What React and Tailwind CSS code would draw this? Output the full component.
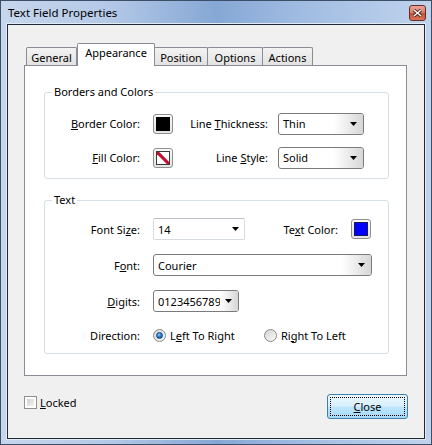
import React from "react";

function Arrow() {
  return (
    <svg width="7" height="4" viewBox="0 0 7 4" className="block">
      <polygon points="0,0 7,0 3.5,4" fill="#000" />
    </svg>
  );
}

function Select({ width, value, clip }) {
  return (
    <div className={`flex h-[22px] border border-[#7b7b7b] rounded-[3px] bg-white overflow-hidden ${width}`}>
      <div className="flex-1 min-w-0 pl-[4px] flex items-center overflow-hidden whitespace-nowrap">{value}</div>
      <div className={`${clip ? "w-[18px]" : "w-[30px]"} h-full bg-gradient-to-r from-white via-[#ececec] to-[#d6d6d6] flex items-center justify-end pr-[6px]`}>
        <Arrow />
      </div>
    </div>
  );
}

function Swatch({ kind }) {
  return (
    <div className="w-[20px] h-[20px] rounded-[3px] border border-[#8e8f8f] bg-gradient-to-b from-[#f8f8f8] to-[#e4e4e4] p-[2px]">
      {kind === "black" && <div className="w-full h-full bg-black border border-black" />}
      {kind === "blue" && <div className="w-full h-full bg-[#0000ff] border border-[#1a1a5a]" />}
      {kind === "none" && (
        <div className="w-full h-full bg-white border border-[#3a3a3a] overflow-hidden">
          <svg width="14" height="14" viewBox="0 0 14 14" className="block">
            <line x1="0" y1="0" x2="14" y2="14" stroke="#c8102e" strokeWidth="3.2" />
          </svg>
        </div>
      )}
    </div>
  );
}

function Radio({ checked }) {
  return (
    <div className="w-[13px] h-[13px] rounded-full border border-[#8a8a8a] bg-gradient-to-br from-[#d4d4d4] to-[#fafafa] flex items-center justify-center">
      {checked && (
        <div className="w-[7px] h-[7px] rounded-full bg-[radial-gradient(circle_at_40%_35%,#8ccaf5_0%,#2a7fcf_45%,#0b3f7a_100%)] border border-[#174a82]" />
      )}
    </div>
  );
}

function Tab({ label, selected, width }) {
  if (selected) {
    return (
      <div className={`${width} h-[23px] relative z-10 bg-white border border-b-0 border-[#898c95] rounded-t-[2px] flex items-start justify-center pt-[3px]`}>
        {label}
      </div>
    );
  }
  return (
    <div className={`${width} h-[18px] mb-px -ml-px first:ml-0 bg-gradient-to-b from-[#f3f3f3] to-[#e2e2e2] border border-b-0 border-[#898c95] rounded-t-[2px] flex items-center justify-center pt-[2px]`}>
      {label}
    </div>
  );
}

export default function App() {
  return (
    <div className="w-[432px] h-[445px] flex flex-col border border-[#3d4f66] bg-[linear-gradient(90deg,#c6d6ec_0%,#b4c9e7_25%,#86a7d5_50%,#a3bee3_72%,#c0d3ed_100%)] font-['Noto_Sans',sans-serif] text-[11px] text-black leading-none">
      <div className="h-[23px] flex items-start justify-between pl-[7px] pr-[5px]">
        <div className="text-[11.5px] pt-[6px] text-black">Text Field Properties</div>
        <div className="mt-[4px] w-[17px] h-[16px] rounded-[3px] border border-[#6b2a21] bg-[linear-gradient(180deg,#e9a597_0%,#d8816d_45%,#c34f35_55%,#d8765c_100%)] flex items-center justify-center">
          <svg width="9" height="8" viewBox="0 0 9 8" className="block">
            <path d="M1 1 L8 7 M8 1 L1 7" stroke="#3a1510" strokeWidth="3" />
            <path d="M1 1 L8 7 M8 1 L1 7" stroke="#fff" strokeWidth="1.6" />
          </svg>
        </div>
      </div>

      <div className="flex-1 mx-[6px] mb-[5px] border border-[#1f2a38] shadow-[0_0_0_1px_#e2eaf4] bg-[#f0f0f0] flex flex-col pt-[18px] pl-[16px] pr-[16px]">
        <div className="flex items-end -mb-px pl-[2px] relative z-10">
          <Tab label="General" width="w-[51px]" />
          <Tab label="Appearance" width="w-[78px]" selected />
          <Tab label="Position" width="w-[54px]" />
          <Tab label="Options" width="w-[56px]" />
          <Tab label="Actions" width="w-[51px]" />
        </div>

        <div className="h-[311px] w-[383px] bg-white border border-[#898c95] pl-[19px] pt-[18px]">
          <fieldset className="w-[345px] border border-[#d5dfe5] rounded-[3px] px-[7px] pb-[10px]">
            <legend className="px-[2px] leading-[16px]">Borders and Colors</legend>
            <div className="pt-[13px] flex flex-col gap-[13px]">
              <div className="flex items-center h-[21px]">
                <div className="w-[88px] text-right"><u>B</u>order Color:</div>
                <div className="ml-[13px]"><Swatch kind="black" /></div>
                <div className="w-[95px] text-right">Line <u>T</u>hickness:</div>
                <div className="ml-[10px]"><Select width="w-[86px]" value="Thin" /></div>
              </div>
              <div className="flex items-center h-[21px]">
                <div className="w-[88px] text-right"><u>F</u>ill Color:</div>
                <div className="ml-[13px]"><Swatch kind="none" /></div>
                <div className="w-[95px] text-right">Line <u>S</u>tyle:</div>
                <div className="ml-[10px]"><Select width="w-[86px]" value="Solid" /></div>
              </div>
            </div>
          </fieldset>

          <fieldset className="mt-[13px] w-[345px] border border-[#d5dfe5] rounded-[3px] px-[7px] pb-[9px]">
            <legend className="px-[2px] leading-[16px]">Text</legend>
            <div className="pt-[10px] flex flex-col gap-[14px]">
              <div className="flex items-center h-[22px]">
                <div className="w-[88px] text-right">Font Si<u>z</u>e:</div>
                <div className="ml-[13px] w-[92px] h-[22px] border border-[#d6dbe1] border-t-[#b9bec6] rounded-[2px] bg-white flex items-center pl-[4px] pr-[5px]">
                  <div className="flex-1">14</div>
                  <Arrow />
                </div>
                <div className="w-[93px] text-right">Te<u>x</u>t Color:</div>
                <div className="ml-[13px]"><Swatch kind="blue" /></div>
              </div>
              <div className="flex items-center h-[22px]">
                <div className="w-[88px] text-right">F<u>o</u>nt:</div>
                <div className="ml-[13px]"><Select width="w-[219px]" value="Courier" /></div>
              </div>
              <div className="flex items-center h-[22px]">
                <div className="w-[88px] text-right"><u>D</u>igits:</div>
                <div className="ml-[13px]"><Select width="w-[86px]" value="0123456789" clip /></div>
              </div>
              <div className="flex items-center h-[18px]">
                <div className="w-[88px] text-right">Direction:</div>
                <div className="ml-[13px] w-[111px] flex items-center">
                  <Radio checked />
                  <span className="ml-[4px]">L<u>e</u>ft To Right</span>
                </div>
                <div className="flex items-center">
                  <Radio />
                  <span className="ml-[4px]">Ri<u>g</u>ht To Left</span>
                </div>
              </div>
            </div>
          </fieldset>
        </div>

        <div className="mt-[18px] h-[25px] flex items-start justify-between">
          <div className="flex items-center mt-[2px]">
            <div className="w-[13px] h-[13px] border border-[#8e8f8f] bg-white p-[2px]">
              <div className="w-full h-full bg-gradient-to-br from-[#cfcfcf] to-[#f4f4f4]" />
            </div>
            <span className="ml-[3px]"><u>L</u>ocked</span>
          </div>
          <div className="w-[81px] h-[25px] rounded-[3px] border border-[#3c7fb1] bg-[linear-gradient(180deg,#eaf6fd_0%,#d9f0fc_48%,#bee6fd_52%,#a7d9f5_100%)] p-[2px]">
            <div className="w-full h-full border border-dotted border-black flex items-center justify-center">
              <span><u>C</u>lose</span>
            </div>
          </div>
        </div>
      </div>
    </div>
  );
}
